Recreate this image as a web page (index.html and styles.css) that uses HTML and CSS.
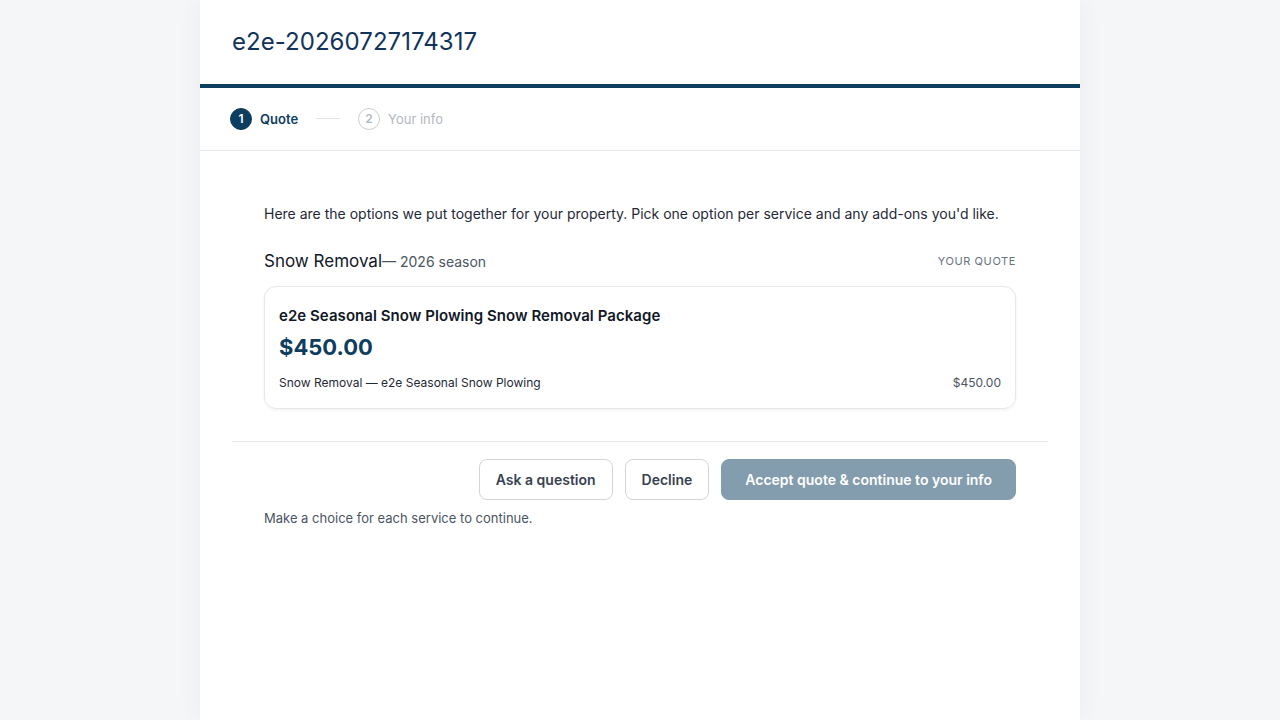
FILE: index.html
```html
<!DOCTYPE html>
<html lang="en">
<head>
<meta charset="utf-8">
<title>Quote</title>
<link rel="stylesheet" href="styles.css">
</head>
<body>
<div class="page">
  <header class="top">
    <h1 class="title">e2e-20260727174317</h1>
  </header>
  <nav class="steps">
    <div class="step active"><span class="dot">1</span><span class="label">Quote</span></div>
    <span class="sep"></span>
    <div class="step"><span class="dot">2</span><span class="label">Your info</span></div>
  </nav>
  <main class="main">
    <div class="content">
      <p class="intro">Here are the options we put together for your property. Pick one option per service and any add-ons you'd like.</p>
      <div class="section-head">
        <div class="section-title"><span class="svc">Snow Removal</span><span class="season">— 2026 season</span></div>
        <span class="tag">YOUR QUOTE</span>
      </div>
      <div class="card">
        <div class="card-title">e2e Seasonal Snow Plowing Snow Removal Package</div>
        <div class="price">$450.00</div>
        <div class="line"><span>Snow Removal — e2e Seasonal Snow Plowing</span><span class="amt">$450.00</span></div>
      </div>
    </div>
    <div class="footer">
      <div class="actions">
        <button class="btn">Ask a question</button>
        <button class="btn">Decline</button>
        <button class="btn primary">Accept quote &amp; continue to your info</button>
      </div>
      <p class="note">Make a choice for each service to continue.</p>
    </div>
  </main>
</div>
</body>
</html>
```
FILE: styles.css
```css
* { box-sizing: border-box; }
html, body { margin: 0; padding: 0; }
body {
  background: #f5f6f8;
  font-family: Inter, "Noto Sans", sans-serif;
  color: #111827;
  min-height: 720px;
}
.page {
  width: 880px;
  margin: 0 auto;
  background: #fff;
  min-height: 720px;
  box-shadow: 0 0 24px rgba(15, 23, 42, 0.05);
}
.top {
  height: 88px;
  border-bottom: 4px solid #0d3d5f;
  padding: 0 32px;
  display: flex;
  align-items: center;
}
.title {
  margin: 0;
  font-size: 24px;
  font-weight: 400;
  color: #12345a;
  letter-spacing: 0.05px;
  padding-bottom: 2px;
}
.steps {
  height: 63px;
  border-bottom: 1px solid #e5e7eb;
  display: flex;
  align-items: center;
  padding: 0 30px 1px;
}
.step { display: flex; align-items: center; gap: 8px; }
.dot {
  width: 22px; height: 22px;
  border-radius: 50%;
  display: flex; align-items: center; justify-content: center;
  font-size: 12px; font-weight: 600;
  border: 1.5px solid #c9cdd3;
  color: #b3b8bf;
}
.label { font-size: 13px; color: #b3b8bf; }
.step.active .dot { background: #0d3d5f; border-color: #0d3d5f; color: #fff; }
.step.active .label { font-weight: 600; color: #0d3d5f; }
.sep { width: 24px; height: 1px; background: #e1e4e8; margin: 0 18px; }
.main { padding: 48px 32px 0; }
.content { padding: 0 32px; }
.intro { margin: 0 0 21px; font-size: 14px; line-height: 30px; color: #1f2937; }
.section-head {
  display: flex; justify-content: space-between; align-items: center;
  height: 22px;
  margin-bottom: 14px;
}
.svc { font-size: 17px; color: #111827; }
.season { font-size: 14px; color: #4b5563; }
.tag { font-size: 11px; letter-spacing: 0.6px; color: #6b7280; }
.card {
  border: 1px solid #e5e7eb;
  border-radius: 12px;
  padding: 18px 14px 16px 14px;
  box-shadow: 0 1px 3px rgba(15, 23, 42, 0.06);
}
.card-title { font-size: 15px; font-weight: 600; color: #111827; line-height: 22px; letter-spacing: 0.05px; }
.price { font-size: 22px; font-weight: 700; color: #0d3d5f; line-height: 30px; margin-top: 5px; }
.line {
  display: flex; justify-content: space-between;
  font-size: 12px; color: #1f2937; margin-top: 12px; line-height: 18px;
}
.line .amt { color: #4b5563; }
.footer {
  margin-top: 32px;
  border-top: 1px solid #e5e7eb;
  padding: 17px 32px 0;
}
.actions { display: flex; justify-content: flex-end; gap: 12px; }
.btn {
  font-family: inherit;
  height: 41px;
  padding: 0 16px;
  border: 1px solid #d1d5db;
  border-radius: 8px;
  background: #fff;
  font-size: 14px;
  font-weight: 600;
  color: #374151;
}
.btn.primary {
  background: #839cae;
  border-color: #839cae;
  color: #fff;
  padding: 0 23px;
}
.note { margin: 9px 0 0; font-size: 13px; color: #4b5563; line-height: 18px; }
```
